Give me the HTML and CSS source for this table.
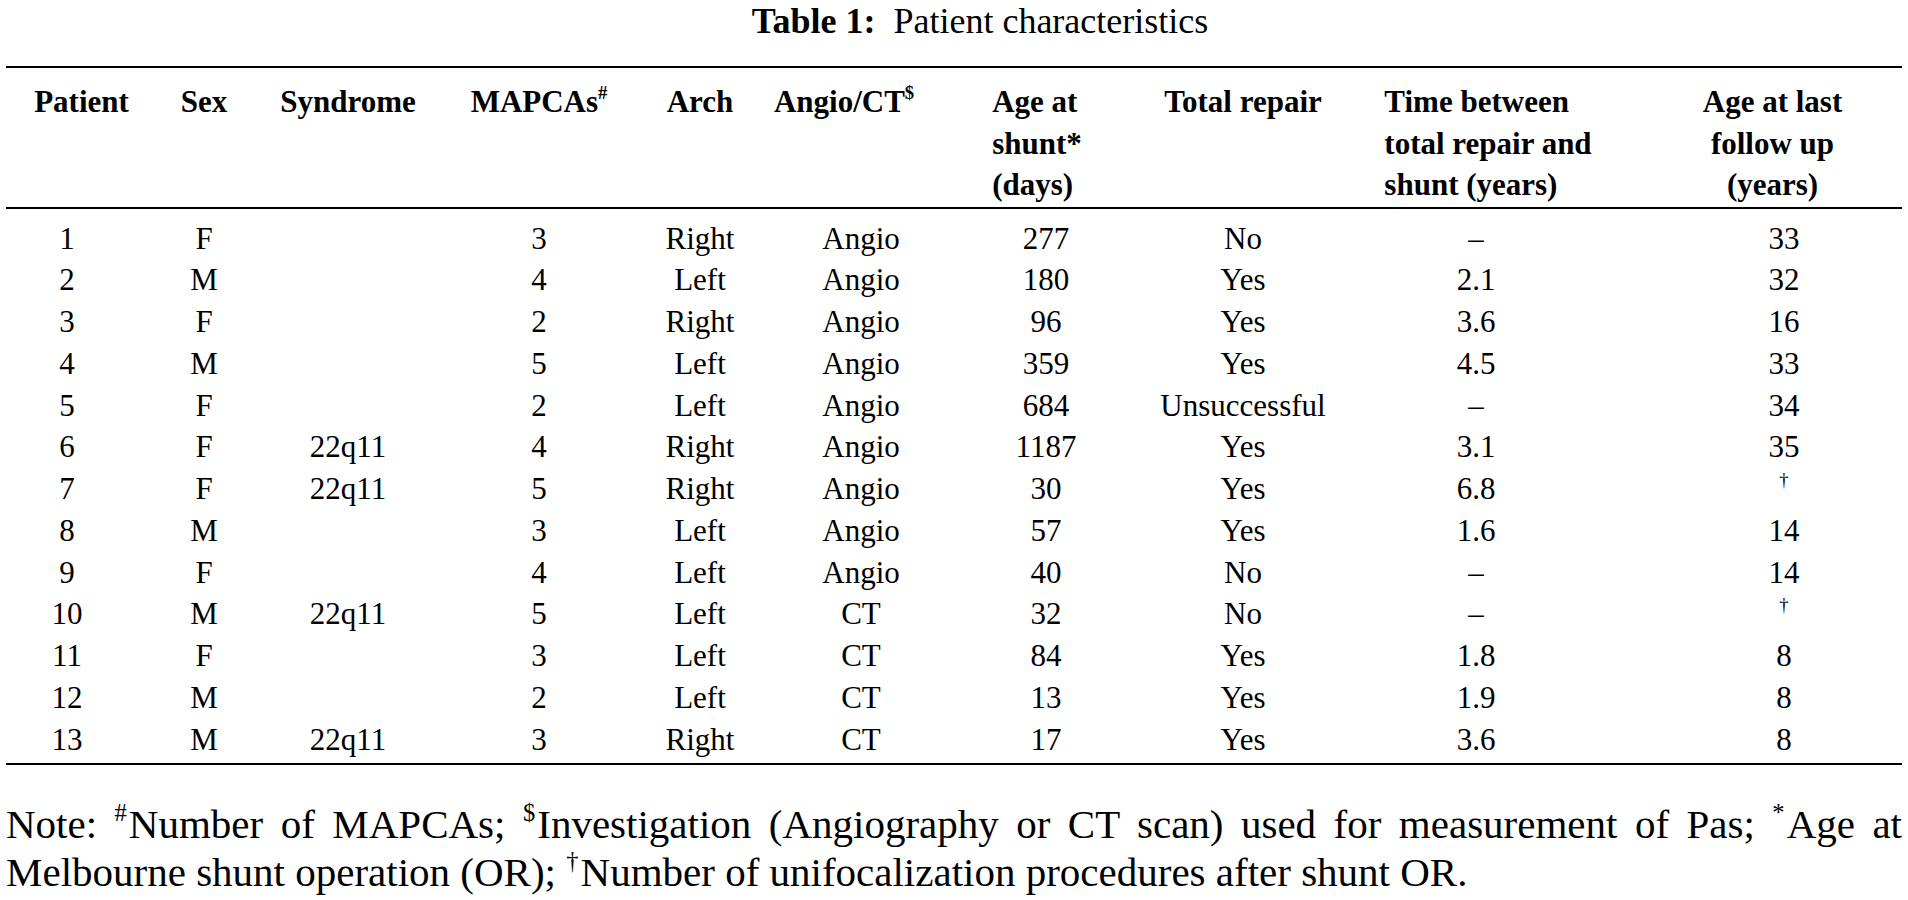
FILE: index.html
```html
<!DOCTYPE html>
<html lang="en">
<head>
<meta charset="utf-8">
<title>Table 1: Patient characteristics</title>
<link rel="stylesheet" href="styles.css">
</head>
<body>
<div class="page">
  <h1 class="title"><b>Table 1:</b> Patient characteristics</h1>
  <table class="tbl">
    <colgroup>
      <col class="w1"><col class="w2"><col class="w3"><col class="w4"><col class="w5">
      <col class="w6"><col class="w7"><col class="w8"><col class="w9"><col class="w10">
    </colgroup>
    <thead>
      <tr>
        <th>Patient</th>
        <th>Sex</th>
        <th>Syndrome</th>
        <th>MAPCAs<sup>#</sup></th>
        <th>Arch</th>
        <th>Angio/CT<sup>$</sup></th>
        <th><span class="stack">Age at<br>shunt*<br>(days)</span></th>
        <th>Total repair</th>
        <th><span class="stack">Time between<br>total repair and<br>shunt (years)</span></th>
        <th>Age at last<br>follow up<br>(years)</th>
      </tr>
    </thead>
    <tbody>
      <tr><td>1</td><td>F</td><td></td><td>3</td><td>Right</td><td>Angio</td><td>277</td><td>No</td><td>–</td><td>33</td></tr>
      <tr><td>2</td><td>M</td><td></td><td>4</td><td>Left</td><td>Angio</td><td>180</td><td>Yes</td><td>2.1</td><td>32</td></tr>
      <tr><td>3</td><td>F</td><td></td><td>2</td><td>Right</td><td>Angio</td><td>96</td><td>Yes</td><td>3.6</td><td>16</td></tr>
      <tr><td>4</td><td>M</td><td></td><td>5</td><td>Left</td><td>Angio</td><td>359</td><td>Yes</td><td>4.5</td><td>33</td></tr>
      <tr><td>5</td><td>F</td><td></td><td>2</td><td>Left</td><td>Angio</td><td>684</td><td>Unsuccessful</td><td>–</td><td>34</td></tr>
      <tr><td>6</td><td>F</td><td>22q11</td><td>4</td><td>Right</td><td>Angio</td><td>1187</td><td>Yes</td><td>3.1</td><td>35</td></tr>
      <tr><td>7</td><td>F</td><td>22q11</td><td>5</td><td>Right</td><td>Angio</td><td>30</td><td>Yes</td><td>6.8</td><td><sup>†</sup></td></tr>
      <tr><td>8</td><td>M</td><td></td><td>3</td><td>Left</td><td>Angio</td><td>57</td><td>Yes</td><td>1.6</td><td>14</td></tr>
      <tr><td>9</td><td>F</td><td></td><td>4</td><td>Left</td><td>Angio</td><td>40</td><td>No</td><td>–</td><td>14</td></tr>
      <tr><td>10</td><td>M</td><td>22q11</td><td>5</td><td>Left</td><td>CT</td><td>32</td><td>No</td><td>–</td><td><sup>†</sup></td></tr>
      <tr><td>11</td><td>F</td><td></td><td>3</td><td>Left</td><td>CT</td><td>84</td><td>Yes</td><td>1.8</td><td>8</td></tr>
      <tr><td>12</td><td>M</td><td></td><td>2</td><td>Left</td><td>CT</td><td>13</td><td>Yes</td><td>1.9</td><td>8</td></tr>
      <tr><td>13</td><td>M</td><td>22q11</td><td>3</td><td>Right</td><td>CT</td><td>17</td><td>Yes</td><td>3.6</td><td>8</td></tr>
    </tbody>
  </table>
  <p class="note">Note: <sup>#</sup>Number of MAPCAs; <sup>$</sup>Investigation (Angiography or CT scan) used for measurement of Pas; <sup>*</sup>Age at Melbourne shunt operation (OR); <sup>†</sup>Number of unifocalization procedures after shunt OR.</p>
</div>
</body>
</html>
```

FILE: styles.css
```css
html, body {
  margin: 0;
  padding: 0;
  background: #ffffff;
  color: #000000;
  font-family: "Liberation Serif", "Times New Roman", serif;
}

.page {
  padding: 0 6px;
}

.title {
  margin: 0 0 24px;
  padding-left: 52px;
  height: 42px;
  font-size: 36px;
  line-height: 42px;
  font-weight: normal;
  text-align: center;
}

.title b {
  font-weight: bold;
  margin-right: 0.25em;
}

sup {
  font-size: 0.6em;
  line-height: 0;
  vertical-align: 0.7em;
}

.note sup {
  margin-right: 2px;
}

.tbl {
  width: 1896px;
  table-layout: fixed;
  border-collapse: separate;
  border-spacing: 0;
  border-top: 2px solid #000;
  border-bottom: 2px solid #000;
  font-size: 31px;
}

.w1 { width: 151px; }
.w2 { width: 94px; }
.w3 { width: 194px; }
.w4 { width: 188px; }
.w5 { width: 134px; }
.w6 { width: 154px; }
.w7 { width: 232px; }
.w8 { width: 180px; }
.w9 { width: 310px; }
.w10 { width: 259px; }

.tbl th {
  padding: 13px 0 1px;
  border-bottom: 2px solid #000;
  vertical-align: top;
  text-align: center;
  font-weight: bold;
  line-height: 41.5px;
  white-space: nowrap;
}

.stack {
  display: inline-block;
  text-align: left;
}

.tbl td {
  padding: 0;
  text-align: center;
  line-height: 41.75px;
  white-space: nowrap;
}

.tbl tbody tr:first-child td { padding-top: 9px; }
.tbl tbody tr:last-child td { padding-bottom: 2.5px; }

.tbl td:nth-child(1) { padding-right: 29px; }
.tbl td:nth-child(6) { padding-left: 34px; }
.tbl td:nth-child(7) { padding-left: 18px; }
.tbl td:nth-child(9) { padding-right: 24px; }
.tbl td:nth-child(10) { padding-left: 23px; }

.note {
  margin: 35px 0 0;
  font-size: 41px;
  line-height: 48.7px;
  text-align: justify;
}
```
